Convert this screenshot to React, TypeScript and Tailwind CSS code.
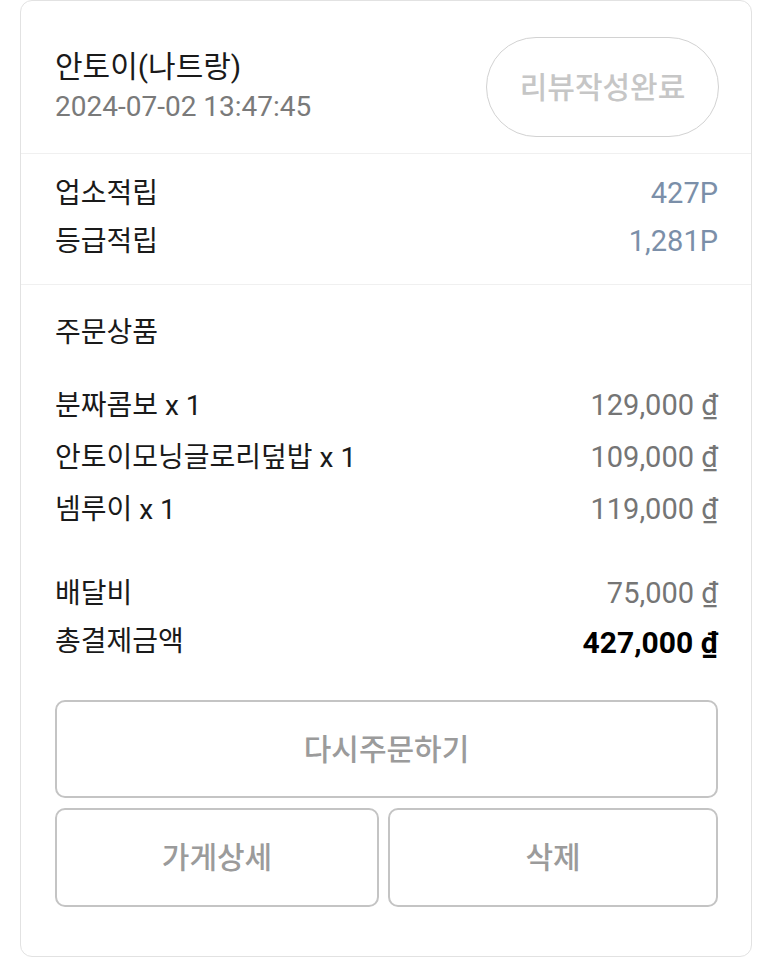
const FONT = "font-['Roboto','Noto_Sans_CJK_KR',sans-serif]";

type Row = { label: string; value: string };

const items: Row[] = [
  { label: "분짜콤보 x 1", value: "129,000" },
  { label: "안토이모닝글로리덮밥 x 1", value: "109,000" },
  { label: "넴루이 x 1", value: "119,000" },
];

export default function App() {
  return (
    <div className={`${FONT} min-h-[959px] bg-white pb-[2px]`}>
      <div className="mx-[20px] w-[732px] h-[957px] rounded-[12px] border border-[#e2e2e2] bg-white flex flex-col">
        {/* header */}
        <div className="h-[153px] shrink-0 flex items-center justify-between pt-[20px] pl-[34px] pr-[32px] border-b border-[#f0f0f0]">
          <div className="flex flex-col">
            <span className="text-[30px] leading-[40px] text-[#1a1a1a]">안토이(나트랑)</span>
            <span className="text-[28px] leading-[40px] text-[#7a7a7a]">2024-07-02 13:47:45</span>
          </div>
          <button
            type="button"
            className="w-[233px] h-[100px] rounded-full border border-[#d2d2d2] text-[30px] font-medium text-[#c6c6c6]"
          >
            리뷰작성완료
          </button>
        </div>

        {/* points */}
        <div className="h-[131px] shrink-0 pt-[16px] pl-[34px] pr-[33px] border-b border-[#f0f0f0]">
          <div className="h-[48px] flex items-center justify-between">
            <span className="text-[28px] text-[#1a1a1a]">업소적립</span>
            <span className="text-[29px] text-[#7b8fa9]">427P</span>
          </div>
          <div className="h-[48px] flex items-center justify-between">
            <span className="text-[28px] text-[#1a1a1a]">등급적립</span>
            <span className="text-[29px] text-[#7b8fa9]">1,281P</span>
          </div>
        </div>

        {/* order */}
        <div className="pt-[24px] pl-[34px] pr-[33px] flex flex-col">
          <div className="h-[48px] flex items-center text-[28px] text-[#1a1a1a]">주문상품</div>
          <div className="mt-[23px] flex flex-col">
            {items.map((it) => (
              <div key={it.label} className="h-[52px] flex items-center justify-between">
                <span className="text-[28px] text-[#1a1a1a]">{it.label}</span>
                <span className="text-[29px] text-[#757575]">{it.value} ₫</span>
              </div>
            ))}
          </div>
          <div className="mt-[34px] flex flex-col">
            <div className="h-[48px] flex items-center justify-between">
              <span className="text-[28px] text-[#1a1a1a]">배달비</span>
              <span className="text-[29px] text-[#757575]">75,000 ₫</span>
            </div>
            <div className="h-[48px] flex items-center justify-between">
              <span className="text-[28px] text-[#1a1a1a]">총결제금액</span>
              <span className="text-[30px] font-bold text-black">427,000 ₫</span>
            </div>
          </div>

          <div className="mt-[34px] flex flex-col gap-[10px]">
            <button
              type="button"
              className="h-[98px] w-full rounded-[10px] border-2 border-[#c4c4c4] text-[30px] font-medium text-[#9b9b9b]"
            >
              다시주문하기
            </button>
            <div className="flex gap-[9px]">
              <button
                type="button"
                className="h-[99px] w-[324px] rounded-[10px] border-2 border-[#c4c4c4] text-[30px] font-medium text-[#9b9b9b]"
              >
                가게상세
              </button>
              <button
                type="button"
                className="h-[99px] flex-1 rounded-[10px] border-2 border-[#c4c4c4] text-[30px] font-medium text-[#9b9b9b]"
              >
                삭제
              </button>
            </div>
          </div>
        </div>
      </div>
    </div>
  );
}
